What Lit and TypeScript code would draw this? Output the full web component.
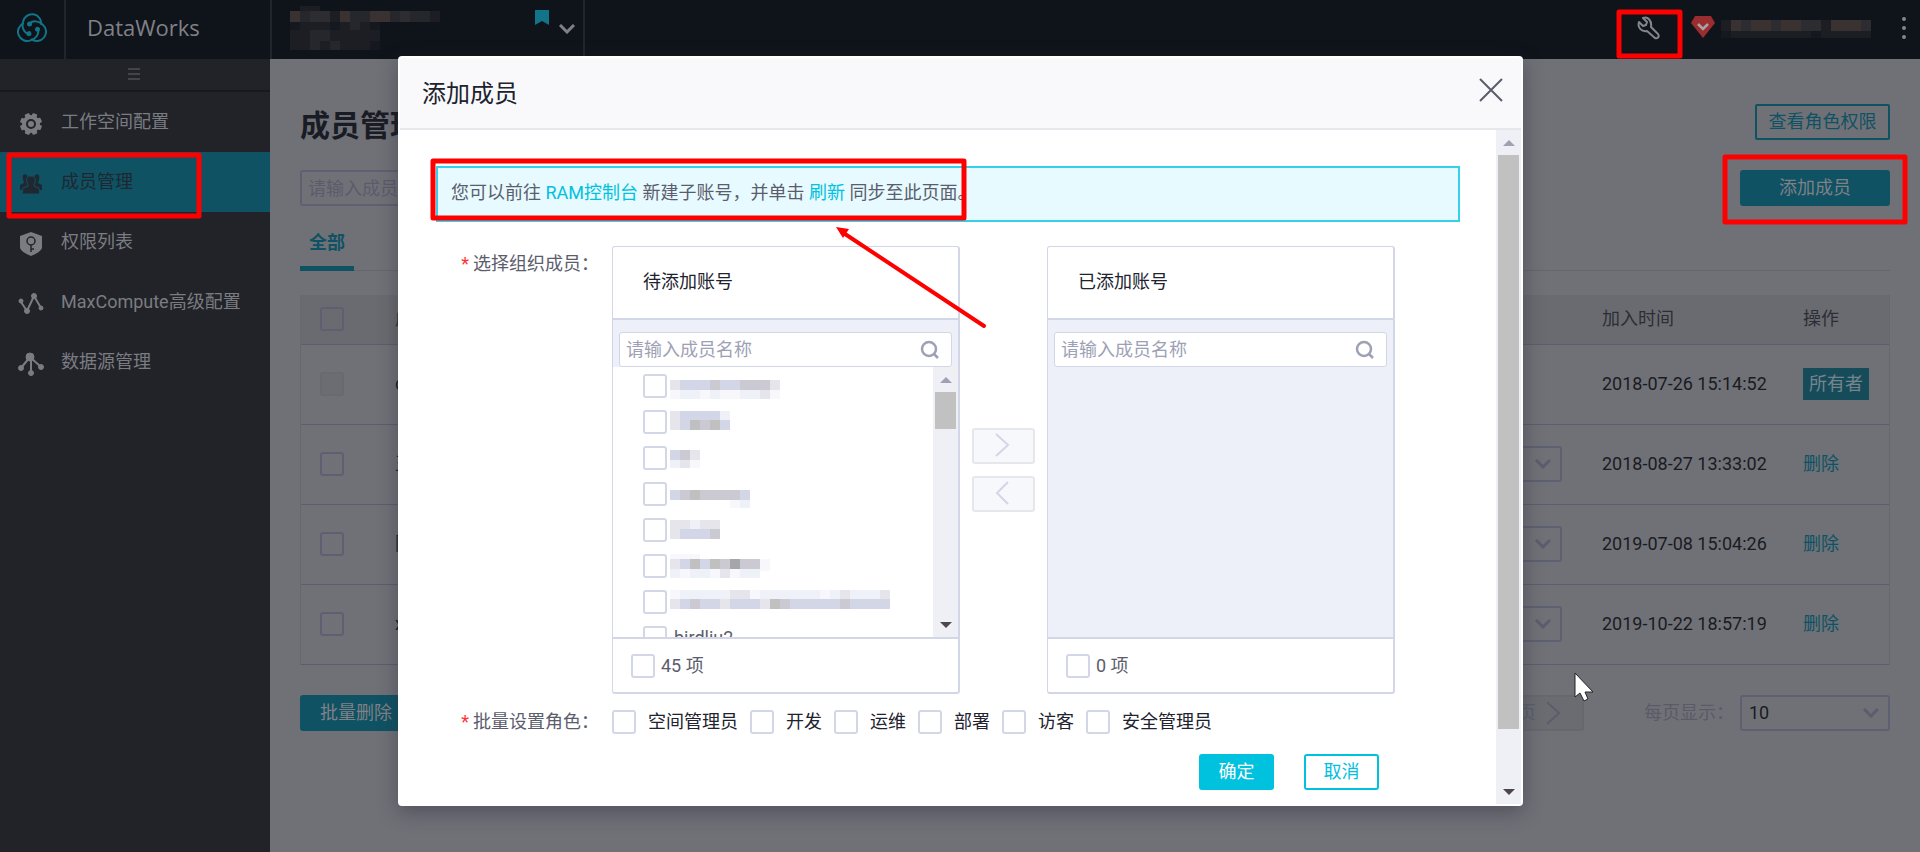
import { LitElement, html, svg, css, nothing } from "lit";
import { customElement, property } from "lit/decorators.js";
import { classMap } from "lit/directives/class-map.js";

const controls = css`
  * { box-sizing: border-box; }
  button, input, select { font: inherit; margin: 0; }
  button { cursor: pointer; }
  a { text-decoration: none; color: inherit; }
  .check {
    appearance: none;
    display: block;
    flex: none;
    width: 24px;
    height: 24px;
    border: 2px solid #d3d6e6;
    border-radius: 3px;
    background: transparent;
  }
`;

const thirds = [0, 120, 240];
const eighths = [0, 45, 90, 135, 180, 225, 270, 315];

const icons = {
  logo: svg`<svg width="30" height="30" viewBox="0 0 30 30">${thirds.map((a) => svg`
    <g transform="rotate(${a} 15 16)"><path d="M12.500 10.500C16 7 22 8 25.500 11.500A9 9 0 0 1 14 26" fill="none" stroke="#127488" stroke-width="2"/><circle cx="12.500" cy="11" r="2.500" fill="#127488"/></g>`)}</svg>`,
  gear: svg`<svg width="22" height="22" viewBox="0 0 22 22" fill="#7b7c82"><circle cx="11" cy="11" r="9"/>${eighths.map((a) =>
    svg`<rect x="8.500" y="0" width="5" height="6" rx="1" transform="rotate(${a + 22} 11 11)"/>`)}<circle cx="11" cy="11" r="4" fill="none" stroke="#212329" stroke-width="2"/></svg>`,
  people: svg`<svg width="22" height="20" viewBox="0 0 22 20" fill="#1f2731"><path d="M7 1C4-1 2 1 3 5c0 2 1 3 1 4l-4 2v5h5l3-4V4zM15 1c3-2 5 0 4 4 0 2-1 3-1 4l4 2v5h-5l-3-4V4z"/><path stroke="#0f5263" d="M11 2c4 0 5 3 4 6 0 2-1 2-1 3v1l5 2 1 6H2l1-6 5-2v-1c0-1-1-1-1-3-1-3 0-6 4-6z"/></svg>`,
  shield: svg`<svg width="22" height="24" viewBox="0 0 22 24"><path fill="#7b7c82" d="m11 0 11 4v11c0 4-6 7-11 9C6 22 0 19 0 15V4z"/><g fill="none" stroke="#23252c" stroke-width="1.500"><circle cx="11" cy="9" r="4"/><path d="M11 13v7M11 17h3"/></g></svg>`,
  graph: svg`<svg width="26" height="22" viewBox="0 0 26 22" fill="#7b7c82" stroke="#7b7c82"><path d="m3 9 6 9 7-15 7 12" fill="none" stroke-width="2"/><circle cx="3" cy="8" r="2"/><circle cx="9" cy="18" r="2.500"/><circle cx="16" cy="3" r="2.500"/><circle cx="23" cy="15" r="2"/></svg>`,
  nodes: svg`<svg width="26" height="24" viewBox="0 0 26 24" fill="#7b7c82" stroke="#7b7c82"><path d="M12 5 3 16M12 5l11 10M13 5v16" fill="none" stroke-width="2"/><circle cx="12" cy="5" r="4"/><circle cx="3" cy="16" r="2.500"/><circle cx="23" cy="15" r="2.500"/><circle cx="13" cy="21" r="2.500"/></svg>`,
  wrench: svg`<svg width="24" height="24" viewBox="0 0 24 24" fill="none" stroke="#85868b" stroke-width="2" stroke-linejoin="round"><path d="M6 2l4 4-1 3-3 1-4-4c-2 6 3 10 8 9l8 7c2 1 5-1 3-4l-7-7C15 5 11 0 6 2z"/></svg>`,
  gem: svg`<svg width="24" height="22" viewBox="0 0 24 22"><path fill="#9b2c30" d="M4 0h16l4 7-12 15L0 7z"/><path d="m7 8 5 5 5-5" fill="none" stroke="#a7a4a8" stroke-width="2.500"/></svg>`,
  search: svg`<svg width="20" height="20" viewBox="0 0 20 20" fill="none" stroke="#9ea1b5" stroke-width="2.500"><circle cx="9" cy="9" r="7"/><path d="m14 14 4 4"/></svg>`,
  close: svg`<svg width="24" height="24" viewBox="0 0 24 24" fill="none" stroke="#5b5d6c" stroke-width="2"><path d="m1 1 22 22M23 1 1 23"/></svg>`,
};

const angle = (dir: "left" | "right", color: string) => svg`<svg width="16" height="26" viewBox="0 0 16 26" fill="none" stroke=${color} stroke-width="2"><path d=${dir === "right" ? "m1 2 12 11L1 24" : "M13 2 2 13l11 11"} /></svg>`;
const chevron = (color: string) => svg`<svg width="16" height="10" viewBox="0 0 16 10" fill="none" stroke=${color} stroke-width="3"><path d="m1 1 7 7 7-7"/></svg>`;

type Strip = [x: number, y: number, h: number, tones: string];
const lightTones: Record<string, string> = { a: "#f8f8fc", b: "#eef1f8", c: "#e6e5eb", d: "#d3d6e6", e: "#cbcad3", f: "#c0c0c0", g: "#a5a6aa" };
const darkTones: Record<string, string> = { a: "#15181f", b: "#1c1e24", c: "#25272c", d: "#2d2d31", e: "#3a3231", f: "#3b4a50" };

const mosaic = (w: number, h: number, strips: Strip[], tones = lightTones) => svg`
  <svg width=${w} height=${h} viewBox="0 0 ${w} ${h}" aria-hidden="true">${strips.map(([x, y, sh, s]) =>
    [...s].map((t, i) => (t === "." ? nothing : svg`<rect x=${x + i * 10} y=${y} width="10" height=${sh} fill=${tones[t]} />`)))}</svg>`;

const accounts: Strip[][] = [
  [[0, 6, 10, "cdddeddeeec"], [0, 16, 9, "abbabaabbca"]],
  [[0, 1, 9, "cddddb"], [0, 10, 10, "cdfefd"]],
  [[0, 4, 10, "dec"], [0, 14, 8, "bca"]],
  [[0, 8, 10, "defeeeed"], [60, 18, 8, "ab"]],
  [[0, 2, 9, "ccbcc"], [0, 11, 10, "cddde"]],
  [[0, 0, 6, "aaa"], [0, 5, 10, "cdfdfegee"], [90, 5, 12, "a"], [0, 15, 9, "babbacabb"]],
  [[0, 0, 9, "abbbbbccabbbbbbabcbbbc"], [0, 9, 10, "cdeddcdddcfedddddedddd"]],
];

@customElement("scroll-rail")
export class ScrollRail extends LitElement {
  @property({ type: Number }) size = 50;

  static styles = css`
    :host { display: flex; flex-direction: column; flex: none; width: 25px; padding: 0 2px 0 2px; background: #eef0f6; }
    .arrow { height: 25px; display: grid; place-items: center; }
    .track { flex: 1; }
    .thumb { background: #c1c1c1; }
  `;

  render() {
    return html`
      <div class="arrow"><svg width="12" height="6"><path d="M0 6 6 0l6 6z" fill="#9ea1b5"/></svg></div>
      <div class="track"><div class="thumb" style="height:${this.size}%"></div></div>
      <div class="arrow"><svg width="12" height="6"><path d="m0 0 6 6 6-6z" fill="#4d474a"/></svg></div>`;
  }
}

@customElement("transfer-panel")
export class TransferPanel extends LitElement {
  @property() heading = "";
  @property({ type: Number }) count = 0;
  @property({ type: Boolean }) filled = false;

  static styles = [controls, css`
    :host { display: flex; flex-direction: column; width: 348px; height: 448px; border: 1px solid #d3d6e6; border-right-width: 2px; border-bottom-width: 2px; border-radius: 3px; background: #fff; color: #5b5d6c; }
    .heading { margin: 0; height: 73px; padding: 0 30px; line-height: 70px; font-size: 18px; font-weight: 400; color: #20222e; border-bottom: 2px solid #d3d6e6; }
    .body { flex: 1; min-height: 0; display: flex; flex-direction: column; background: #edf0f8; }
    .search { display: flex; align-items: center; flex: none; height: 35px; margin: 12px 6px 0; padding: 0 11px 0 6px; border: 1px solid #d3d6e6; border-radius: 3px; background: #fff; }
    .field { flex: 1; min-width: 0; border: 0; padding: 0; background: none; outline: 0; }
    .field::placeholder { color: #9ea1b5; opacity: 1; }
    .results { flex: 1; min-height: 0; display: flex; }
    .list { flex: 1; margin: 0; padding: 7px 0 0 30px; overflow: hidden; list-style: none; background: #fff; }
    .item { display: flex; height: 36px; }
    .person { display: flex; gap: 3px; }
    .name { padding-left: 4px; line-height: 24px; }
    .footer { display: flex; align-items: center; gap: 6px; height: 55px; padding: 0 18px; border-top: 2px solid #d3d6e6; }
  `];

  render() {
    return html`
      <h3 class="heading">${this.heading}</h3>
      <div class="body">
        <div class="search">
          <input class="field" type="text" aria-label=${this.heading} placeholder="请输入成员名称">
          ${icons.search}
        </div>
        ${this.filled ? html`
          <div class="results">
            <ul class="list">
              ${accounts.map((strips) => html`<li class="item"><label class="person"><input class="check" type="checkbox" aria-label="账号">${mosaic(230, 27, strips)}</label></li>`)}
              <li class="item"><label class="person"><input class="check" type="checkbox"><span class="name">birdliu2</span></label></li>
            </ul>
            <scroll-rail .size=${17}></scroll-rail>
          </div>` : nothing}
      </div>
      <label class="footer"><input class="check" type="checkbox"><span>${this.count} 项</span></label>`;
  }
}

@customElement("member-dialog")
export class MemberDialog extends LitElement {
  static styles = [controls, css`
    :host { display: flex; flex-direction: column; border: 2px solid #fff; border-radius: 4px; background: #fff; color: #5b5d6c; box-shadow: 0 6px 20px rgba(40, 42, 60, .45); }
    .top { display: flex; align-items: center; justify-content: space-between; height: 72px; padding: 2px 18px 0 22px; background: #f9f9fc; border-bottom: 2px solid #e6e7eb; }
    .title { margin: 0; font-size: 24px; font-weight: 400; color: #20222e; }
    .close { display: grid; padding: 0; border: 0; background: none; margin-bottom: 8px; }
    .body { flex: 1; min-height: 0; display: flex; }
    .content { flex: 1; min-width: 0; padding: 36px 36px 0; }
    .notice { height: 56px; margin: 0 0 24px; padding: 0 13px; line-height: 50px; border: 2px solid #36d0e8; background: #e6faff; white-space: nowrap; }
    .link { color: #00c1de; }
    .row { display: grid; grid-template-columns: 176px 1fr; margin-bottom: 10px; }
    .caption { padding-right: 13px; line-height: 36px; text-align: right; }
    .star { color: #f33; margin-right: 4px; }
    .transfer { display: flex; align-items: center; gap: 12px; }
    .moves { display: flex; flex-direction: column; gap: 12px; }
    .move { display: grid; place-items: center; width: 63px; height: 36px; padding: 0 1px 2px 0; border: 2px solid #e6e7eb; border-radius: 3px; background: #f7f8fb; }
    .roles { display: flex; align-items: center; gap: 12px; color: #20222e; }
    .role { display: flex; align-items: center; gap: 12px; white-space: nowrap; }
    .actions { display: flex; justify-content: flex-end; gap: 30px; padding: 4px 81px 0 0; }
    .button { width: 75px; height: 36px; padding: 0; line-height: 32px; border: 2px solid #00c1de; border-radius: 3px; background: #fff; color: #00c1de; }
    .primary { background: #00c1de; color: #fff; }
  `];

  render() {
    const roles = ["空间管理员", "开发", "运维", "部署", "访客", "安全管理员"];
    return html`
      <header class="top"><h2 class="title">添加成员</h2><button class="close" aria-label="关闭">${icons.close}</button></header>
      <div class="body">
        <form class="content" @submit=${(e: Event) => e.preventDefault()}>
          <p class="notice">您可以前往 <a class="link" href="#ram">RAM控制台</a> 新建子账号，并单击 <a class="link" href="#refresh">刷新</a> 同步至此页面。</p>
          <div class="row">
            <span class="caption"><span class="star">*</span>选择组织成员：</span>
            <div class="transfer">
              <transfer-panel heading="待添加账号" .count=${45} filled></transfer-panel>
              <div class="moves">
                <button class="move" type="button" aria-label="添加">${angle("right", "#d3d6e6")}</button>
                <button class="move" type="button" aria-label="移除">${angle("left", "#d3d6e6")}</button>
              </div>
              <transfer-panel heading="已添加账号" .count=${0}></transfer-panel>
            </div>
          </div>
          <div class="row">
            <span class="caption"><span class="star">*</span>批量设置角色：</span>
            <div class="roles">${roles.map((r) => html`<label class="role"><input class="check" type="checkbox">${r}</label>`)}</div>
          </div>
          <div class="actions"><button class="button primary">确定</button><button class="button" type="button">取消</button></div>
        </form>
        <scroll-rail .size=${92}></scroll-rail>
      </div>`;
  }
}

@customElement("app-root")
export class AppRoot extends LitElement {
  static styles = [controls, css`
    :host { display: flex; flex-direction: column; position: relative; min-height: 100vh; overflow: hidden; background: #707177; color: #191b22; font-family: Roboto, "Noto Sans CJK SC", sans-serif; font-size: 18px; line-height: 24px; }
    .header { display: flex; align-items: stretch; height: 59px; background: #0f131a; }
    .logo { display: grid; place-items: center; width: 66px; padding-bottom: 4px; border-right: 2px solid #23252c; }
    .brand { display: flex; align-items: center; width: 206px; padding: 0 21px 5px; border-right: 2px solid #23252c; font-family: "Open Sans", sans-serif; font-size: 22px; color: #808187; }
    .workspace { display: flex; gap: 10px; width: 313px; padding-left: 18px; border-right: 2px solid #23252c; }
    .masked { flex: 1; padding-top: 6px; }
    .flag { margin-top: 10px; }
    .open { margin: 16px 8px 0 0; }
    .tools { flex: 1; display: flex; justify-content: flex-end; padding: 16px 13px 0 0; }
    .tool { padding: 0; border: 0; background: none; height: 24px; margin-right: 30px; }
    .user { display: flex; gap: 6px; margin-right: 30px; }
    .columns { flex: 1; display: flex; }
    .sidebar { width: 270px; flex: none; background: #212329; color: #7b7c82; }
    .collapse { display: grid; place-items: center; width: 100%; height: 33px; padding: 0 2px 2px 0; border: 0; border-bottom: 2px solid #17191e; background: none; }
    .item { display: grid; grid-template-columns: 22px 1fr; align-items: center; gap: 19px; height: 60px; padding: 0 20px; }
    .glyph { display: flex; justify-content: center; padding-top: 4px; }
    .glyph svg { flex: none; }
    .active { background: #0f5263; color: #1f2731; }
    .main { flex: 1; min-width: 0; padding: 43px 30px 0; }
    .bar { display: flex; justify-content: space-between; align-items: center; }
    .headline { margin: 0; font-size: 30px; line-height: 48px; font-weight: 700; color: #191c24; }
    .outline { width: 135px; height: 36px; padding: 0; margin-bottom: 8px; border: 2px solid #0f5263; border-radius: 2px; background: none; color: #0f5263; }
    .solid { height: 36px; width: 150px; padding: 0; border: 0; border-radius: 3px; background: #0f5263; color: #808187; }
    .filters { margin-top: 20px; }
    .find { width: 300px; height: 36px; padding: 0 6px; border: 2px solid #5d6070; border-radius: 3px; background: none; }
    .find::placeholder { color: #5a5c6b; opacity: 1; }
    .tabs { display: flex; height: 65px; border-bottom: 1px solid #64666f; }
    .tab { height: 65px; padding: 25px 9px 0; border-bottom: 5px solid #0f5263; color: #0f5263; font-weight: 700; }
    .grid { width: 100%; margin: 24px 0 30px; table-layout: fixed; border-collapse: separate; border-spacing: 0; border: 1px solid #666870; border-top: 0; border-bottom: 0; }
    .pick { width: 74px; }
    .who { width: 500px; }
    .when { width: 201px; }
    .do { width: 106px; }
    .grid th, .grid td { border-bottom: 1px solid #5a5e6e; text-align: left; }
    .grid th { height: 50px; padding: 0 20px 2px; font-weight: 400; background: #6a6b70; color: #2c2e36; }
    .grid td { height: 80px; padding: 0 20px 2px; white-space: nowrap; }
    .grid th:first-child, .grid td:first-child { padding-left: 19px; }
    .dim { border-color: #5d6070; }
    .dim:disabled { border-color: #696a70; background: #6c6d72; }
    .action { color: #0f5263; }
    .tag { display: inline-block; padding: 4px 6px; background: #164c5a; color: #77848b; }
    .select { display: grid; align-items: center; }
    .choice { grid-area: 1 / 1; width: 100%; height: 36px; padding: 0 7px; appearance: none; border: 2px solid #5d6070; border-radius: 3px; background: none; color: #191b22; }
    .caret { grid-area: 1 / 1; justify-self: end; display: grid; margin-right: 11px; pointer-events: none; }
    .pager { display: flex; align-items: center; gap: 6px; color: #595b69; }
    .erase { width: 112px; margin-right: auto; }
    .next { display: flex; align-items: center; gap: 10px; height: 36px; padding: 0 20px; border: 2px solid #67686e; border-radius: 3px; background: #6b6c71; color: #5a5d6c; margin-right: 54px; }
    .size { width: 150px; }
    .overlay { position: absolute; inset: 0; display: grid; padding: 56px 397px 46px 398px; }
    .marks { position: absolute; inset: 0; width: 100%; height: 100%; pointer-events: none; }
  `];

  private menu = [
    { icon: icons.gear, text: "工作空间配置" },
    { icon: icons.people, text: "成员管理", active: true },
    { icon: icons.shield, text: "权限列表" },
    { icon: icons.graph, text: "MaxCompute高级配置" },
    { icon: icons.nodes, text: "数据源管理" },
  ];

  private members = [
    { name: "d", time: "2018-07-26 15:14:52", owner: true },
    { name: "王", time: "2018-08-27 13:33:02" },
    { name: "阿", time: "2019-07-08 15:04:26" },
    { name: "x", time: "2019-10-22 18:57:19" },
  ];

  private dropdown(label: string, option: string) {
    return html`<div class="select"><select class="choice" aria-label=${label}><option>${option}</option></select><span class="caret">${chevron("#5a5d6c")}</span></div>`;
  }

  render() {
    return html`
      <header class="header">
        <div class="logo">${icons.logo}</div>
        <div class="brand">DataWorks</div>
        <div class="workspace">
          <div class="masked">${mosaic(150, 46, [[0, 5, 11, "ecddbecceecdccb"], [10, 0, 5, "bb"], [0, 16, 8, "abbbabcba"], [0, 24, 11, "bbccbbbbb"], [0, 35, 9, "bbcbcbbba"]], darkTones)}</div>
          <svg class="flag" width="14" height="15"><path d="M0 0h14v15l-7-4-7 4z" fill="#127488"/></svg>
          <span class="open">${chevron("#808187")}</span>
        </div>
        <div class="tools">
          <button class="tool" aria-label="设置">${icons.wrench}</button>
          <div class="user">${icons.gem}${mosaic(150, 24, [[0, 4, 11, "bedeedeeddbeeed"], [0, 15, 7, "abbbbbbbbabbbbb"]], darkTones)}</div>
          <svg width="6" height="24" fill="#85868b"><circle cx="3" cy="3" r="2"/><circle cx="3" cy="12" r="2"/><circle cx="3" cy="21" r="2"/></svg>
        </div>
      </header>
      <div class="columns">
        <nav class="sidebar">
          <button class="collapse" aria-label="收起"><svg width="12" height="12"><path d="M0 1h12M0 6h12M0 11h12" stroke="#66676c"/></svg></button>
          ${this.menu.map((m) => html`<a href="#menu" class=${classMap({ item: true, active: !!m.active })}><span class="glyph">${m.icon}</span><span>${m.text}</span></a>`)}
        </nav>
        <main class="main">
          <div class="bar"><h1 class="headline">成员管理</h1><button class="outline">查看角色权限</button></div>
          <div class="bar filters"><input class="find" type="text" aria-label="成员名称" placeholder="请输入成员名称"><button class="solid">添加成员</button></div>
          <div class="tabs"><a class="tab" href="#all">全部</a></div>
          <table class="grid">
            <thead><tr>
              <th class="pick"><input class="check dim" type="checkbox" aria-label="全选"></th>
              <th class="who">成员</th><th></th><th class="when">加入时间</th><th class="do">操作</th>
            </tr></thead>
            <tbody>${this.members.map((m) => html`<tr>
              <td><input class="check dim" type="checkbox" aria-label="选择" ?disabled=${!!m.owner}></td>
              <td>${m.name}</td>
              <td>${m.owner ? nothing : this.dropdown("角色", "")}</td>
              <td>${m.time}</td>
              <td>${m.owner ? html`<span class="tag">所有者</span>` : html`<a class="action" href="#remove">删除</a>`}</td>
            </tr>`)}</tbody>
          </table>
          <div class="pager">
            <button class="solid erase">批量删除</button>
            <button class="next">下一页${angle("right", "#5a5d6c")}</button>
            <span>每页显示：</span>
            <div class="size">${this.dropdown("每页显示", "10")}</div>
          </div>
        </main>
      </div>
      <div class="overlay"><member-dialog role="dialog" aria-label="添加成员"></member-dialog></div>
      <svg class="marks" aria-hidden="true">
        <g fill="none" stroke="#f00" stroke-width="5" stroke-linejoin="round">
          <rect x="1619" y="12" width="61" height="44"/>
          <rect x="1725" y="157" width="180" height="65"/>
          <rect x="9" y="155" width="190" height="61"/>
          <rect x="433" y="161" width="531" height="57"/>
          <path d="M984 326 842 232" stroke-width="4" stroke-linecap="round"/>
        </g>
        <path d="m836 227 13 2-6 9z" fill="#f00"/>
        <path d="M1575 673v24l5-4 4 8 4-2-3-7h8z" fill="#fff" stroke="#222"/>
      </svg>`;
  }
}
